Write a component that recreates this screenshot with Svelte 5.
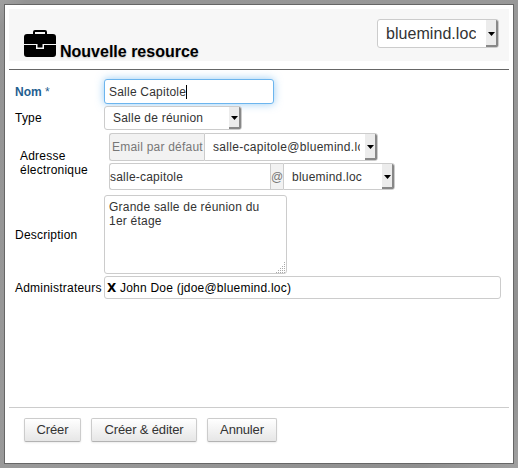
<script>
  let name = $state('Salle Capitole');
  let description = $state('Grande salle de réunion du\n1er étage');
  let emailPrefix = $state('salle-capitole');
</script>

{#snippet select(text, cls)}
  <div class="select {cls}" role="combobox" aria-expanded="false" aria-controls="none" tabindex="0">
    <span class="value"><span class="txt">{text}</span></span>
    <span class="arrow">
      <svg width="7" height="4" viewBox="0 0 7 4"><path d="M0 0h7L3.5 4z" /></svg>
    </span>
  </div>
{/snippet}

<div class="backdrop">
  <div class="dialog">
    <header>
      <svg class="case" width="32" height="28" viewBox="0 0 32 28">
        <path d="M9 5V2Q9 0 11 0h10Q23 0 23 2v3h-2V2H11v3z" />
        <path d="M3 4h26q3 0 3 3v7H0V7q0-3 3-3z" />
        <path d="M0 15h12v4h8v-4h12v9q0 3-3 3H3q-3 0-3-3z" />
        <path d="M13.500 14h5v3.500h-5z" />
      </svg>
      <h1>Nouvelle resource</h1>
      {@render select('bluemind.loc', 'domain')}
    </header>

    <main>
      <div class="row nom">
        <span class="label required">Nom <span class="star">*</span></span>
        <div class="field focus"><span>{name}</span><i class="caret"></i></div>
      </div>
      <div class="row type">
        <span class="label">Type</span>
        {@render select('Salle de réunion', 'kind')}
      </div>
      <div class="row mail">
        <span class="label two">Adresse<br />électronique</span>
        <div class="mails">
          <div class="group">
            <span class="addon default"><span>Email par défaut</span></span>
            {@render select('salle-capitole@bluemind.loc', 'address')}
          </div>
          <div class="group">
            <div class="field prefix"><span>{emailPrefix}</span></div>
            <span class="addon at">@</span>
            {@render select('bluemind.loc', 'maildomain')}
          </div>
        </div>
      </div>
      <div class="row desc">
        <span class="label">Description</span>
        <div class="area">
          {description}
          <svg class="grip" width="11" height="11" viewBox="0 0 11 11" shape-rendering="crispEdges">
            <path
              d="M9 .5h1M9 2.500h1M7 4.500h1M9 4.500h1M5 6.500h1M7 6.500h1M9 6.500h1M3 8.500h1M5 8.500h1M7 8.500h1M9 8.500h1M1 10.500h1M3 10.500h1M5 10.500h1M7 10.500h1M9 10.500h1"
            />
          </svg>
        </div>
      </div>
      <div class="row admins">
        <span class="label">Administrateurs</span>
        <div class="field people"><b>X</b><span>John Doe (jdoe@bluemind.loc)</span></div>
      </div>
    </main>

    <footer>
      <button class="b1">Créer</button>
      <button class="b2">Créer &amp; éditer</button>
      <button class="b3">Annuler</button>
    </footer>
  </div>
</div>

<style>
  :global(body) {
    margin: 0;
  }
  .backdrop,
  .backdrop * {
    box-sizing: border-box;
  }
  .backdrop {
    width: 518px;
    height: 468px;
    padding: 4px;
    overflow: hidden;
    background: linear-gradient(135deg, #a0a0a0 0, #949494 20px, #999 50%, #8f8f8f 90%, #a0a0a0 100%);
    font: 12px/14px 'Liberation Sans', Arial, sans-serif;
    letter-spacing: 0.22px;
    color: #000;
  }
  .dialog {
    width: 510px;
    height: 460px;
    border: 1px solid #666;
    background: #fff;
    padding: 4px;
    display: flex;
    flex-direction: column;
  }
  header {
    height: 52px;
    background: #f7f7f7;
    display: flex;
    align-items: flex-start;
    padding: 10px 10px 0 15px;
    flex: none;
  }
  .case {
    margin-top: 11px;
    flex: none;
  }
  h1 {
    margin: 24px auto 0 4px;
    font-size: 16px;
    line-height: 18px;
    font-weight: bold;
    letter-spacing: 0;
    white-space: nowrap;
    text-shadow: 0 1px 2px rgba(0, 0, 0, 0.2);
  }
  main {
    margin-top: 8px;
    border-top: 1px solid #666;
    height: 338px;
    padding: 9px 0 0 6px;
    flex: none;
  }
  .row {
    display: flex;
    align-items: center;
  }
  .label {
    width: 89px;
    flex: none;
    white-space: nowrap;
  }
  .two {
    padding-top: 2px;
  }
  .required {
    color: #1f6090;
    font-weight: bold;
    letter-spacing: 0;
  }
  .star {
    font-weight: normal;
  }
  .field,
  .area,
  .select {
    border: 1px solid #ccc;
    border-radius: 3px;
    background: #fff;
    color: #333;
    white-space: nowrap;
  }
  .field {
    display: flex;
    align-items: center;
  }
  .select {
    display: flex;
    overflow: hidden;
  }
  .value {
    flex: 1;
    min-width: 0;
    padding: 0 5px 0 8px;
    display: flex;
    align-items: center;
  }
  .txt {
    overflow: hidden;
  }
  .arrow {
    width: 12px;
    flex: none;
    display: flex;
    align-items: center;
    justify-content: center;
    background: #ececec;
    border-right: 2px solid #888;
    border-bottom: 2px solid #888;
  }
  .arrow svg {
    position: relative;
    top: 1px;
  }
  .domain {
    width: 122px;
    height: 29px;
    font-size: 16px;
    line-height: 20px;
    letter-spacing: 0.05px;
  }
  .nom {
    height: 25px;
  }
  .focus {
    width: 170px;
    height: 25px;
    padding-left: 4px;
    border-color: #6cb5ee;
    box-shadow: 0 0 8px rgba(82, 168, 236, 0.6);
  }
  .caret {
    width: 1px;
    height: 14px;
    background: #000;
  }
  .type {
    margin-top: 2px;
    height: 24px;
  }
  .kind {
    width: 138px;
    height: 24px;
  }
  .mail {
    margin-top: 3px;
    padding-left: 5px;
  }
  .mails {
    display: flex;
    flex-direction: column;
    gap: 2px;
  }
  .group {
    display: flex;
    height: 28px;
  }
  .group + .group {
    height: 27px;
  }
  .addon {
    display: flex;
    align-items: center;
    background: #f2f2f2;
    border: 1px solid #ccc;
    border-right: 0;
    color: #777;
    white-space: nowrap;
  }
  .default {
    width: 95px;
    padding-left: 2px;
    border-radius: 3px 0 0 3px;
  }
  .address {
    width: 174px;
    border-radius: 0 3px 3px 0;
    letter-spacing: 0.3px;
  }
  .prefix {
    width: 161px;
    border-right: 0;
    border-radius: 3px 0 0 3px;
  }
  .at {
    width: 13px;
    justify-content: center;
    letter-spacing: 0;
  }
  .maildomain {
    width: 112px;
    border-radius: 0 3px 3px 0;
  }
  .desc {
    margin-top: 5px;
    height: 79px;
  }
  .area {
    width: 183px;
    height: 79px;
    padding: 4px;
    white-space: pre-line;
    position: relative;
  }
  .grip {
    position: absolute;
    right: 0;
    bottom: 0;
    stroke: #aaa;
    stroke-width: 1;
  }
  .admins {
    margin-top: 2px;
    height: 23px;
  }
  .people {
    width: 397px;
    height: 23px;
    padding-left: 2px;
    color: #000;
  }
  .people b {
    width: 13px;
    font-family: 'DejaVu Sans', sans-serif;
    font-size: 12px;
  }
  footer {
    border-top: 1px solid #ccc;
    padding: 10px 15px;
    display: flex;
    gap: 10px;
  }
  button {
    height: 24px;
    padding: 0;
    border: 1px solid #ccc;
    border-bottom-color: #b3b3b3;
    border-radius: 2px;
    background: linear-gradient(#fff, #e6e6e6);
    box-shadow: 0 1px 2px rgba(0, 0, 0, 0.08);
    color: #333;
    font: 13px/20px 'Liberation Sans', Arial, sans-serif;
    letter-spacing: -0.15px;
    white-space: nowrap;
  }
  .b1 {
    width: 57px;
  }
  .b2 {
    width: 106px;
  }
  .b3 {
    width: 70px;
  }
</style>
